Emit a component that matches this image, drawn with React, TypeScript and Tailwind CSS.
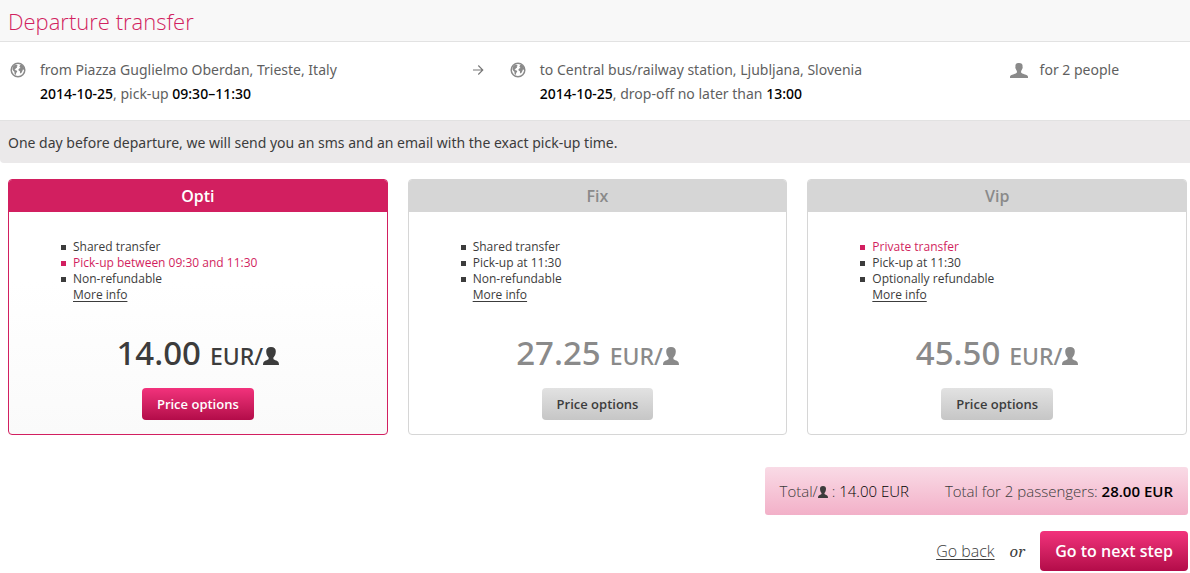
import React from "react";

function GlobeIcon() {
  return (
    <svg viewBox="0 0 16 16" className="size-4 shrink-0 text-[#8a8a8a]" aria-hidden="true">
      <circle cx="8" cy="8" r="6.8" fill="none" stroke="currentColor" strokeWidth="1.5" />
      <path
        fill="currentColor"
        d="M3 4.600 5 2.800l2 .2.700.9-1 .7.400 1-1.200.7-.8 1.100-.8.1 1.300.8 1.400.5.200.9-.9 1-.4 1.600-.7.7-.7-1.600-.1-1.600-1.100-1-.9-1.600zM9.400 4.500l.8-1.500 1.500-.3 1.900 2.100.7 2.100-.4 1-.9-.6-.4 1.200-.8 1.700-1 1.200-.7-.4-.3-1.900-1-.4-.4-1.200.8-1.100 1.300-.3-.4-.7z"
      />
    </svg>
  );
}

function PeopleIcon() {
  return (
    <svg viewBox="0 0 18 15" className="h-[15px] w-[18px] shrink-0 text-[#8a8a8a]" aria-hidden="true">
      <path
        fill="currentColor"
        d="M9 0c2.500 0 3.600 1.200 3.600 2.900 0 .5-.1.9-.1 1.300.5.300.3 1.300-.3 1.600-.2 1-.6 1.600-1.100 2.100v1.700c.5.700 1.500 1.100 3.100 1.600 2.400.8 3.800 1.200 3.800 2.500V15H0v-1.300c0-1.300 1.400-1.700 3.800-2.500 1.600-.5 2.600-.9 3.100-1.600V7.900C6.400 7.400 6 6.800 5.800 5.800c-.6-.3-.8-1.300-.3-1.600 0-.4-.1-.8-.1-1.300C5.400 1.200 6.500 0 9 0z"
      />
    </svg>
  );
}

function PersonIcon({ className }: { className: string }) {
  return (
    <svg viewBox="0 0 16 18" preserveAspectRatio="none" className={className} aria-hidden="true">
      <path
        fill="currentColor"
        d="M8 0c3.400 0 4.800 1.800 4.800 4.300 0 2.700-1 5-2.400 6.100v1.500c.6.700 1.400 1 2.900 1.600 1.900.9 2.700 1.700 2.700 4.500H0c0-2.800.8-3.600 2.700-4.500 1.500-.6 2.300-.9 2.900-1.600v-1.500C4.200 9.300 3.200 7 3.200 4.300 3.200 1.800 4.600 0 8 0z"
      />
    </svg>
  );
}

function ArrowIcon() {
  return (
    <svg viewBox="0 0 12 12" className="size-3 shrink-0 text-[#777]" aria-hidden="true">
      <path d="M1 6h10M6.300 1.500 10.800 6l-4.500 4.500" fill="none" stroke="currentColor" strokeWidth="1.100" />
    </svg>
  );
}

type Offer = {
  name: string;
  features: { text: string; highlight?: boolean }[];
  price: string;
  selected?: boolean;
};

const offers: Offer[] = [
  {
    name: "Opti",
    features: [
      { text: "Shared transfer" },
      { text: "Pick-up between 09:30 and 11:30", highlight: true },
      { text: "Non-refundable" },
    ],
    price: "14.00",
    selected: true,
  },
  {
    name: "Fix",
    features: [{ text: "Shared transfer" }, { text: "Pick-up at 11:30" }, { text: "Non-refundable" }],
    price: "27.25",
  },
  {
    name: "Vip",
    features: [
      { text: "Private transfer", highlight: true },
      { text: "Pick-up at 11:30" },
      { text: "Optionally refundable" },
    ],
    price: "45.50",
  },
];

function OfferCard({ offer }: { offer: Offer }) {
  const on = offer.selected;
  return (
    <article
      className={
        on
          ? "flex flex-col overflow-hidden rounded border border-[#d21f60] bg-linear-to-b from-white from-40% to-[#fafafa]"
          : "flex flex-col overflow-hidden rounded border border-[#d6d6d6] bg-white"
      }
    >
      <h2
        className={
          on
            ? "bg-[#d21f60] text-center text-base leading-8 font-semibold text-white"
            : "bg-[#d6d6d6] text-center text-base leading-8 font-semibold text-[#8a8a8a]"
        }
      >
        {offer.name}
      </h2>
      <div className="px-[52px] pt-[27px] text-xs leading-4 text-[#3c3c3c]">
        <ul>
          {offer.features.map((f) => (
            <li
              key={f.text}
              className={f.highlight ? "flex items-center gap-[7px] text-[#d21f60]" : "flex items-center gap-[7px]"}
            >
              <span className="size-[5px] bg-current" />
              {f.text}
            </li>
          ))}
        </ul>
        <a href="#info" className="ml-3 underline underline-offset-2">
          More info
        </a>
      </div>
      <p
        className={
          on
            ? "mt-7 flex items-baseline justify-center font-['Noto_Sans',sans-serif] text-[33px] leading-[44px] font-medium text-[#3c3c3c]"
            : "mt-7 flex items-baseline justify-center font-['Noto_Sans',sans-serif] text-[33px] leading-[44px] font-medium text-[#8a8a8a]"
        }
      >
        <span>{offer.price}</span>
        <span className="ml-[9px] text-[23px]">EUR/</span>
        <PersonIcon className="h-[18px] w-4" />
      </p>
      <button
        type="button"
        className={
          on
            ? "mx-auto mt-2.5 mb-3.5 h-8 rounded bg-linear-to-b from-[#f2327c] to-[#b30b49] px-[15px] text-[13px] font-semibold text-white"
            : "mx-auto mt-2.5 mb-3.5 h-8 rounded bg-linear-to-b from-[#e2e2e2] to-[#c6c6c6] px-[15px] text-[13px] font-semibold text-[#3c3c3c]"
        }
      >
        Price options
      </button>
    </article>
  );
}

export default function App() {
  return (
    <main className="bg-white font-['Open_Sans',sans-serif] text-sm text-[#3c3c3c]">
      <header className="border-b border-[#e2e2e2] bg-[#f8f8f8] px-2 pt-[5px] pb-1">
        <h1 className="text-[22px] leading-8 font-light text-[#d21f60]">Departure transfer</h1>
      </header>

      <section className="grid grid-cols-[42%_42%_1fr] pt-4 pb-[14px] font-['Noto_Sans',sans-serif] leading-6 text-[#5f5f5f]">
        <div className="flex pl-2.5">
          <div className="flex h-6 w-[30px] shrink-0 items-center">
            <GlobeIcon />
          </div>
          <div className="grow">
            <p>from Piazza Guglielmo Oberdan, Trieste, Italy</p>
            <p>
              <strong className="font-medium text-black">2014-10-25</strong>, pick-up{" "}
              <strong className="font-medium text-black">09:30–11:30</strong>
            </p>
          </div>
          <div className="flex h-6 items-center pr-4">
            <ArrowIcon />
          </div>
        </div>
        <div className="flex pl-2.5">
          <div className="flex h-6 w-[30px] shrink-0 items-center">
            <GlobeIcon />
          </div>
          <div>
            <p>to Central bus/railway station, Ljubljana, Slovenia</p>
            <p>
              <strong className="font-medium text-black">2014-10-25</strong>, drop-off no later than{" "}
              <strong className="font-medium text-black">13:00</strong>
            </p>
          </div>
        </div>
        <div className="flex pl-2.5">
          <div className="flex h-6 w-[30px] shrink-0 items-center">
            <PeopleIcon />
          </div>
          <p>for 2 people</p>
        </div>
      </section>

      <p className="rounded-bl border-t border-[#e2e2e2] bg-[#ebe9ea] px-2 pt-2.5 pb-2 font-['Noto_Sans',sans-serif] leading-6">
        One day before departure, we will send you an sms and an email with the exact pick-up time.
      </p>

      <section className="grid grid-cols-3 gap-5 pt-4 pr-[3px] pl-2">
        {offers.map((o) => (
          <OfferCard key={o.name} offer={o} />
        ))}
      </section>

      <footer className="flex flex-col items-end pt-8 pr-0.5 pb-0.5">
        <div className="flex h-12 items-center gap-9 rounded-[3px] bg-linear-to-b from-[#f9dbe6] to-[#f2b0c8] px-[15px] pt-0.5 text-[15px] font-light">
          <p className="flex items-center">
            Total/
            <PersonIcon className="h-3 w-2.5" />
            <span className="ml-1">:&nbsp;</span>
            <span className="text-black">14.00 EUR</span>
          </p>
          <p>
            Total for 2 passengers: <strong className="font-semibold text-black">28.00 EUR</strong>
          </p>
        </div>
        <div className="mt-4 flex items-center gap-[15px] text-base">
          <a href="#back" className="font-light underline underline-offset-2">
            Go back
          </a>
          <em className="font-['Noto_Serif','Liberation_Serif',serif] text-[15px]">or</em>
          <button
            type="button"
            className="h-10 rounded bg-linear-to-b from-[#f2327c] to-[#b30b49] px-[15px] font-semibold text-white"
          >
            Go to next step
          </button>
        </div>
      </footer>
    </main>
  );
}
